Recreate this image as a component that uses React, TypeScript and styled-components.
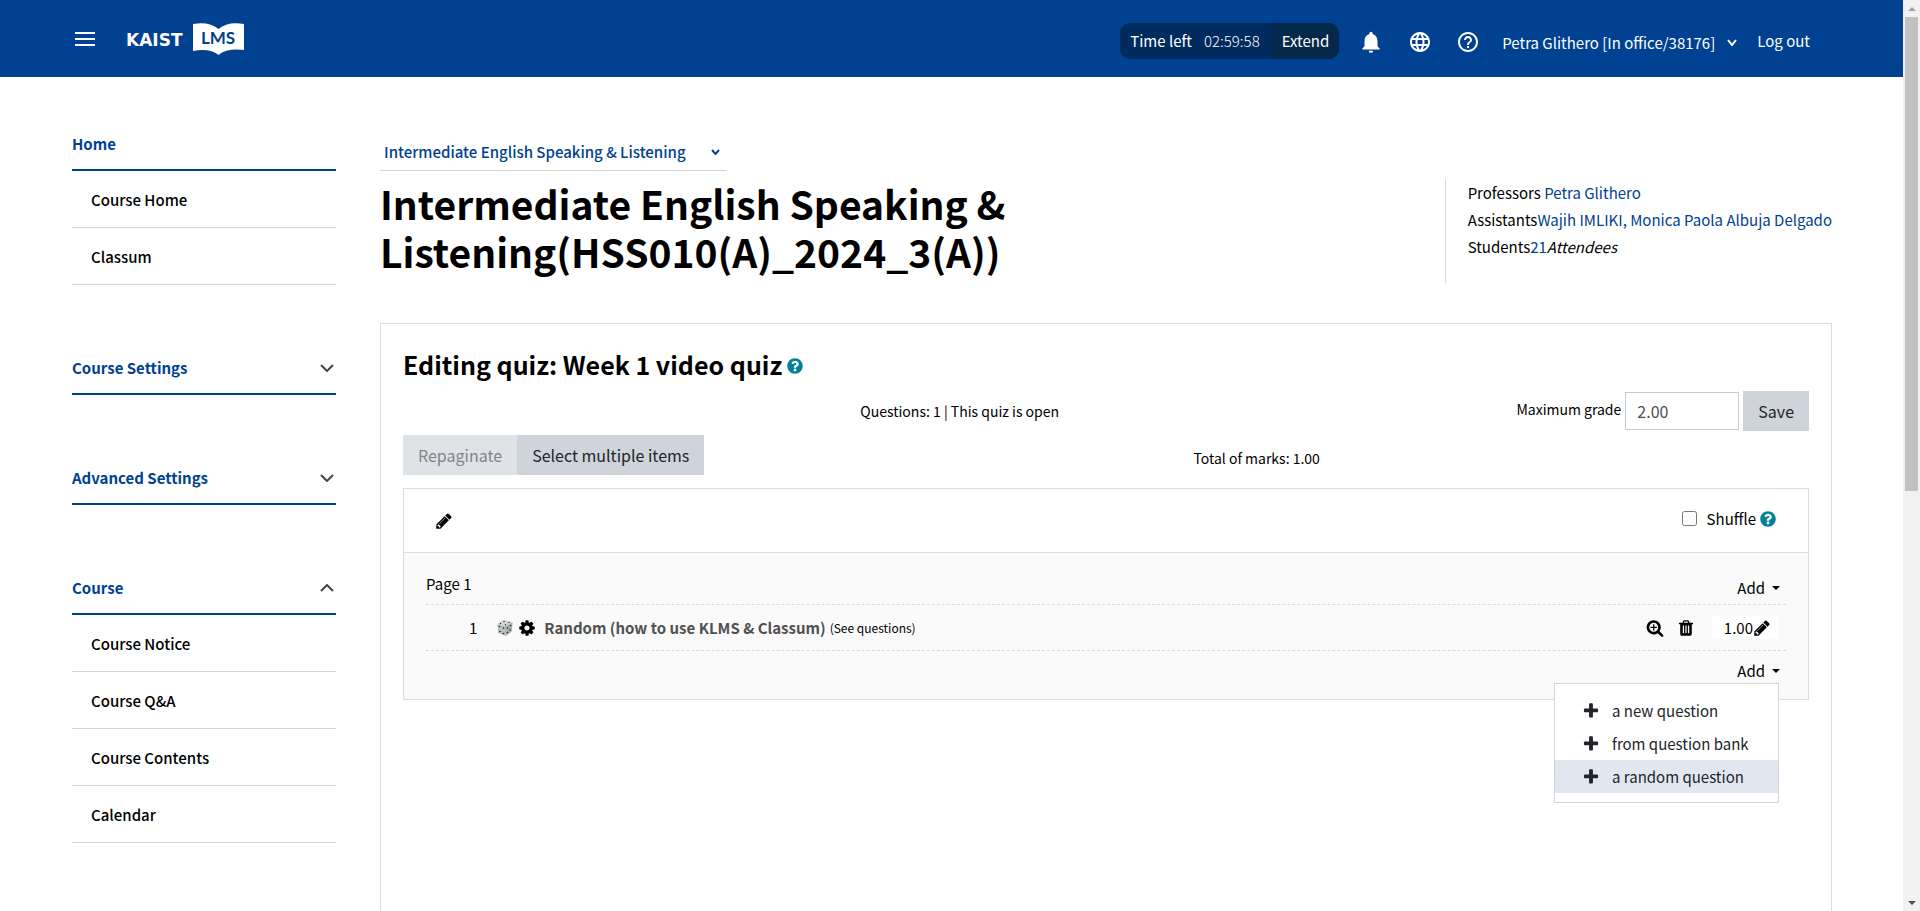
import React from "react";
import styled, { createGlobalStyle } from "styled-components";
import { MdNotifications, MdLanguage, MdHelpOutline } from "react-icons/md";
import { FaQuestionCircle } from "react-icons/fa";

const navy = "#004191";
const line = "#d5d5d5";
const panelLine = "#dddddd";

const GlobalStyle = createGlobalStyle`
  *, *::before, *::after { box-sizing: border-box; }
  body {
    margin: 0;
    color: #000;
    background: #fff;
    font-family: "Noto Sans CJK KR", "Noto Sans", sans-serif;
    font-size: 15px;
    line-height: 24px;
  }
  a { color: inherit; text-decoration: none; }
  h1, h2, p, ul { margin: 0; padding: 0; }
  ul { list-style: none; }
  button, input, select { font: inherit; color: inherit; }
  button { border: 0; padding: 0; background: none; cursor: pointer; }
  svg { display: block; flex: none; }
`;

/* ---------- icons ---------- */

const paths = {
  pencil:
    "M491 1536l91-91-235-235-91 91v107h128v128h107zm523-928q0-22-22-22-10 0-17 7l-542 542q-7 7-7 17 0 22 22 22 10 0 17-7l542-542q7-7 7-17zm-54-192l416 416-832 832h-416v-416zm683 96q0 53-37 90l-166 166-416-416 166-165q36-38 90-38 53 0 91 38l235 234q37 39 37 91z",
  cog: "M1152 896q0-106-75-181t-181-75-181 75-75 181 75 181 181 75 181-75 75-181zm512-109v222q0 12-8 23t-20 13l-185 28q-19 54-39 91 35 50 107 138 10 12 10 25t-9 23q-27 37-99 108t-94 71q-12 0-26-9l-138-108q-44 23-91 38-16 136-29 186-7 28-36 28h-222q-14 0-24.5-8.5t-11.5-21.5l-28-184q-49-16-90-37l-141 107q-10 9-25 9-14 0-25-11-126-114-165-168-7-10-7-23 0-12 8-23 15-21 51-66.5t54-70.5q-27-50-41-99l-183-27q-13-2-21-12.5t-8-23.5v-222q0-12 8-23t19-13l186-28q14-46 39-92-40-57-107-138-10-12-10-24 0-10 9-23 26-36 98.5-107.5t94.5-71.5q13 0 26 10l138 107q44-23 91-38 16-136 29-186 7-28 36-28h222q14 0 24.5 8.5t11.5 21.5l28 184q49 16 90 37l142-107q9-9 24-9 13 0 25 10 129 119 165 170 7 8 7 22 0 12-8 23-15 21-51 66.5t-54 70.5q26 50 41 98l183 28q13 2 21 12.5t8 23.5z",
  trash:
    "M704 1376v-704q0-14-9-23t-23-9h-64q-14 0-23 9t-9 23v704q0 14 9 23t23 9h64q14 0 23-9t9-23zm256 0v-704q0-14-9-23t-23-9h-64q-14 0-23 9t-9 23v704q0 14 9 23t23 9h64q14 0 23-9t9-23zm256 0v-704q0-14-9-23t-23-9h-64q-14 0-23 9t-9 23v704q0 14 9 23t23 9h64q14 0 23-9t9-23zm-544-992h448l-48-117q-7-9-17-11h-317q-10 2-17 11zm928 32v64q0 14-9 23t-23 9h-96v948q0 83-47 143.5t-113 60.5h-832q-66 0-113-58.5t-47-141.5v-952h-96q-14 0-23-9t-9-23v-64q0-14 9-23t23-9h309l70-167q15-37 54-63t79-26h320q40 0 79 26t54 63l70 167h309q14 0 23 9t9 23z",
  zoom: "M1088 800v64q0 13-9.5 22.5t-22.5 9.5h-224v224q0 13-9.5 22.5t-22.5 9.5h-64q-13 0-22.5-9.5t-9.5-22.5v-224h-224q-13 0-22.5-9.5t-9.5-22.5v-64q0-13 9.5-22.5t22.5-9.5h224v-224q0-13 9.5-22.5t22.5-9.5h64q13 0 22.5 9.5t9.5 22.5v224h224q13 0 22.5 9.5t9.5 22.5zm128 32q0-185-131.5-316.5t-316.5-131.5-316.5 131.5-131.5 316.5 131.5 316.5 316.5 131.5 316.5-131.5 131.5-316.5zm512 832q0 53-37.5 90.5t-90.5 37.5q-54 0-90-38l-343-342q-179 124-399 124-143 0-273.5-55.5t-225-150-150-225-55.5-273.5 55.5-273.5 150-225 225-150 273.5-55.5 273.5 55.5 225 150 150 225 55.5 273.5q0 220-124 399l343 343q37 37 37 90z",
  plus: "M1600 736v192q0 40-28 68t-68 28h-416v416q0 40-28 68t-68 28h-192q-40 0-68-28t-28-68v-416h-416q-40 0-68-28t-28-68v-192q0-40 28-68t68-28h416v-416q0-40 28-68t68-28h192q40 0 68 28t28 68v416h416q40 0 68 28t28 68z",
};

function Icon({ name, size = 18 }: { name: keyof typeof paths; size?: number }) {
  return (
    <svg width={size} height={size} viewBox="0 0 1792 1792" fill="currentColor" aria-hidden="true">
      <path d={paths[name]} />
    </svg>
  );
}

function Chevron({ width, height, stroke = 2, up = false }: { width: number; height: number; stroke?: number; up?: boolean }) {
  return (
    <svg width={width} height={height} viewBox={`0 0 ${width} ${height}`} fill="none" stroke="currentColor" strokeWidth={stroke} aria-hidden="true">
      <path d={up ? `M1 ${height - 1}L${width / 2} 1L${width - 1} ${height - 1}` : `M1 1L${width / 2} ${height - 1}L${width - 1} 1`} />
    </svg>
  );
}

function Dice() {
  return (
    <svg width="16" height="18" viewBox="0 0 16 18" aria-hidden="true">
      <path d="M7 1L15.500 3.500L14.500 12.500L8.500 17L1 14L.5 5Z" fill="#b9bfbf" />
      <path d="M7 1L15.500 3.500L8.500 7.500L.5 5Z" fill="#d3d8d8" />
      <path d="M8.500 7.500L15.500 3.500L14.500 12.500L8.500 17Z" fill="#a9b0b0" />
      <g fill="#1c2222">
        <circle cx="7" cy="2.500" r=".7" />
        <circle cx="3.500" cy="4.500" r=".7" />
        <circle cx="12" cy="3.500" r=".7" />
        <circle cx="8.500" cy="5.800" r=".7" />
        <circle cx="2.500" cy="7.500" r=".8" />
        <circle cx="6.500" cy="9" r=".8" />
        <circle cx="3" cy="12.500" r=".8" />
        <circle cx="6.500" cy="14.500" r=".8" />
        <circle cx="10.500" cy="9" r=".8" />
        <circle cx="13.500" cy="6.500" r=".8" />
        <circle cx="10.500" cy="13.500" r=".8" />
        <circle cx="13" cy="11" r=".8" />
      </g>
    </svg>
  );
}

function Logo() {
  return (
    <svg width="118" height="34" viewBox="0 0 118 34" role="img" aria-label="KAIST LMS">
      <text x="-1" y="24" fill="#fff" fontFamily="DejaVu Sans, sans-serif" fontWeight="700" fontSize="17">
        KAIST
      </text>
      <path d="M66 2Q82 -1 91.500 7Q101 -1 117 2V28Q100 26 91.500 33Q83 26 66 29Z" fill="#fff" />
      <text x="91" y="22" fill={navy} textAnchor="middle" fontFamily="Lato, sans-serif" fontWeight="700" fontSize="17">
        LMS
      </text>
    </svg>
  );
}

/* ---------- frame ---------- */

const Frame = styled.div`
  display: flex;
  height: 100vh;
`;

const Page = styled.div`
  flex: 1;
  min-width: 0;
  overflow: hidden;
`;

const ScrollTrack = styled.div`
  display: flex;
  flex-direction: column;
  align-items: center;
  width: 17px;
  background: #f1f1f1;
`;

const ScrollArrow = styled.div<{ $down?: boolean }>`
  display: grid;
  place-items: center;
  height: 17px;
  color: ${(p) => (p.$down ? "#505050" : "#a3a3a3")};
`;

const ScrollThumb = styled.div`
  width: 13px;
  height: 52%;
  background: #c1c1c1;
`;

const ScrollRail = styled.div`
  flex: 1;
`;

/* ---------- header ---------- */

const Header = styled.header`
  display: flex;
  align-items: center;
  justify-content: space-between;
  height: 77px;
  padding: 0 93px 0 75px;
  background: ${navy};
  color: #fff;
`;

const Brand = styled.div`
  display: flex;
  align-items: center;
  gap: 32px;
`;

const MenuButton = styled.button`
  display: grid;
  gap: 4px;
  width: 20px;
  span {
    height: 2px;
    background: #fff;
  }
`;

const Tools = styled.div`
  display: flex;
  align-items: center;
  padding-top: 4px;
`;

const Timer = styled.div`
  display: flex;
  height: 36px;
  margin-right: 19px;
  border-radius: 10px;
  overflow: hidden;
  line-height: 36px;
  background: #002b5e;
`;

const TimeLeft = styled.div`
  display: flex;
  gap: 12px;
  padding: 0 12px 0 10px;
`;

const TimeValue = styled.span`
  font-weight: 300;
`;

const ExtendButton = styled.button`
  padding: 0 10px;
  background: #05294b;
`;

const IconGroup = styled.div`
  display: flex;
  align-items: center;
  gap: 24px;
  margin-right: 22px;
  padding-top: 2px;
`;

const UserButton = styled.button`
  display: flex;
  align-items: center;
  gap: 12px;
  margin-right: 20px;
  padding-top: 4px;
`;

/* ---------- body columns ---------- */

const Columns = styled.div`
  display: flex;
  gap: 44px;
  padding: 55px 71px 0 72px;
`;

const Sidebar = styled.nav`
  display: flex;
  flex-direction: column;
  flex: none;
  gap: 71px;
  width: 264px;
`;

const NavHeading = styled.button`
  display: flex;
  align-items: center;
  justify-content: space-between;
  width: 100%;
  height: 39px;
  padding: 0 2px 13px 0;
  border-bottom: 2px solid ${navy};
  color: ${navy};
  font-weight: 700;
  svg {
    color: #444;
  }
`;

const NavLink = styled.a`
  display: block;
  height: 57px;
  padding: 1px 19px 0;
  border-bottom: 1px solid ${line};
  line-height: 56px;
  font-weight: 500;
`;

const Main = styled.main`
  flex: 1;
  min-width: 0;
`;

const CourseSelect = styled.label`
  display: inline-flex;
  align-items: center;
  height: 32px;
  margin-top: 7px;
  padding: 0 7px 6px 0;
  border-bottom: 1px solid ${line};
  color: ${navy};
  select {
    appearance: none;
    padding: 0 25px 0 4px;
    border: 0;
    background: none;
    font-weight: 500;
  }
`;

const TitleRow = styled.div`
  display: flex;
  justify-content: space-between;
  align-items: flex-start;
  height: 152px;
  padding-top: 8px;
`;

const CourseTitle = styled.h1`
  flex: 0 1 720px;
  font-size: 39px;
  line-height: 48px;
  font-weight: 700;
  overflow-wrap: anywhere;
`;

const People = styled.div`
  height: 104px;
  padding: 0 0 0 22px;
  border-left: 1px solid #ccd9e8;
  line-height: 27px;
  white-space: nowrap;
  a {
    color: ${navy};
  }
`;

const Panel = styled.section`
  min-height: 620px;
  padding: 22px;
  border: 1px solid ${panelLine};
`;

const QuizTitle = styled.h2`
  display: flex;
  align-items: center;
  gap: 5px;
  height: 36px;
  font-size: 25px;
  font-weight: 700;
  button {
    padding-top: 4px;
  }
`;

const HelpButton = styled.button`
  color: #008196;
`;

const ControlRow = styled.div<{ $end?: boolean }>`
  display: flex;
  align-items: center;
  height: 40px;
  margin-top: ${(p) => (p.$end ? "4px" : "9px")};
`;

const Centered = styled.p<{ $low?: boolean }>`
  flex: 1;
  padding-top: ${(p) => (p.$low ? "6px" : "0")};
  font-size: 14px;
  text-align: center;
`;

const GradeForm = styled.form`
  display: flex;
  align-items: center;
  gap: 4px;
`;

const GradeLabel = styled.label`
  padding-bottom: 4px;
  font-size: 14px;
`;

const GradeInput = styled.input`
  width: 114px;
  height: 38px;
  padding: 0 11px;
  border: 1px solid #c8cacd;
  color: #495057;
  font-size: 16px;
`;

const GrayButton = styled.button`
  height: 40px;
  padding: 0 15px;
  background: #ced4da;
  color: #212529;
  font-size: 16px;
  &:disabled {
    background: #dfe3e7;
    color: #818589;
  }
`;

const Section = styled.div`
  margin-top: 13px;
  border: 1px solid ${panelLine};
  background: #fafafa;
`;

const SectionHead = styled.div`
  display: flex;
  align-items: center;
  justify-content: space-between;
  height: 64px;
  padding: 0 32px 0 31px;
  border-bottom: 1px solid ${panelLine};
  background: #fff;
`;

const Shuffle = styled.div`
  display: flex;
  align-items: center;
  gap: 4px;
  padding-bottom: 4px;
  label {
    display: flex;
    align-items: center;
    gap: 10px;
  }
  input {
    width: 15px;
    height: 15px;
    margin: 0;
  }
`;

const SectionBody = styled.div`
  padding: 13px 22px 0;
`;

const PageRow = styled.div`
  display: flex;
  align-items: flex-start;
  justify-content: space-between;
  height: 38px;
  padding: 6px 6px 4px 0;
  button {
    align-self: flex-end;
  }
`;

const Slot = styled.div`
  display: flex;
  align-items: center;
  height: 47px;
  padding: 0 7px 0 43px;
  border: 1px dashed #d9d9d9;
  border-width: 1px 0;
`;

const SlotIcons = styled.div`
  display: flex;
  align-items: center;
  gap: 5px;
  margin: 0 8px 0 20px;
`;

const QuestionName = styled.a`
  margin-right: 4px;
  color: #505050;
  font-weight: 700;
`;

const SeeQuestions = styled.a`
  font-size: 12px;
`;

const SlotActions = styled.div`
  display: flex;
  align-items: center;
  gap: 13px;
  margin-left: auto;
`;

const MarkButton = styled.button`
  display: flex;
  align-items: center;
  height: 23px;
  margin-left: 4px;
  padding: 0 8px 0 12px;
  background: #fff;
`;

const AddRow = styled.div`
  display: flex;
  justify-content: flex-end;
  height: 48px;
  padding: 8px 6px 0 0;
`;

const Dropdown = styled.div`
  position: relative;
`;

const AddButton = styled.button`
  display: flex;
  align-items: center;
  gap: 7px;
`;

const Caret = styled.span`
  border: 4px solid transparent;
  border-top-color: currentColor;
  border-bottom: 0;
`;

const Menu = styled.ul`
  position: absolute;
  top: 24px;
  right: 1px;
  width: 225px;
  padding: 10px 0 9px;
  border: 1px solid #d3d6d9;
  background: #fff;
`;

const MenuItem = styled.a<{ $active?: boolean }>`
  display: flex;
  align-items: center;
  gap: 12px;
  height: 33px;
  padding-left: 27px;
  background: ${(p) => (p.$active ? "#e1e7f1" : "#fff")};
  color: #212529;
`;

/* ---------- content ---------- */

const groups: { title: string; open?: boolean; items: string[] }[] = [
  { title: "Home", items: ["Course Home", "Classum"] },
  { title: "Course Settings", open: false, items: [] },
  { title: "Advanced Settings", open: false, items: [] },
  { title: "Course", open: true, items: ["Course Notice", "Course Q&A", "Course Contents", "Calendar"] },
];

const addOptions = ["a new question", "from question bank", "a random question"];

export default function App() {
  return (
    <Frame>
      <GlobalStyle />
      <Page>
        <Header>
          <Brand>
            <MenuButton aria-label="Menu">
              <span />
              <span />
              <span />
            </MenuButton>
            <a href="#home">
              <Logo />
            </a>
          </Brand>
          <Tools>
            <Timer>
              <TimeLeft>
                <span>Time left</span>
                <TimeValue>02:59:58</TimeValue>
              </TimeLeft>
              <ExtendButton>Extend</ExtendButton>
            </Timer>
            <IconGroup>
              <button aria-label="Notifications"><MdNotifications size={26} /></button>
              <button aria-label="Language"><MdLanguage size={24} /></button>
              <button aria-label="Help"><MdHelpOutline size={24} /></button>
            </IconGroup>
            <UserButton>
              Petra Glithero [In office/38176]
              <Chevron width={10} height={7} />
            </UserButton>
            <a href="#logout">Log out</a>
          </Tools>
        </Header>

        <Columns>
          <Sidebar>
            {groups.map((g) => (
              <div key={g.title}>
                <NavHeading>
                  {g.title}
                  {g.open !== undefined && <Chevron width={14} height={8} up={g.open} />}
                </NavHeading>
                {g.items.map((item) => (
                  <NavLink key={item} href="#course">{item}</NavLink>
                ))}
              </div>
            ))}
          </Sidebar>

          <Main>
            <CourseSelect>
              <select aria-label="Course">
                <option>Intermediate English Speaking &amp; Listening</option>
              </select>
              <Chevron width={9} height={6} />
            </CourseSelect>

            <TitleRow>
              <CourseTitle>Intermediate English Speaking &amp; Listening(HSS010(A)_2024_3(A))</CourseTitle>
              <People>
                <p>Professors <a href="#petra">Petra Glithero</a></p>
                <p>Assistants<a href="#assistants">Wajih IMLIKI, Monica Paola Albuja Delgado</a></p>
                <p>Students<a href="#students">21</a><em>Attendees</em></p>
              </People>
            </TitleRow>

            <Panel>
              <QuizTitle>
                Editing quiz: Week 1 video quiz
                <HelpButton aria-label="Help with editing quiz"><FaQuestionCircle size={16} /></HelpButton>
              </QuizTitle>

              <ControlRow>
                <Centered>Questions: 1 | This quiz is open</Centered>
                <GradeForm>
                  <GradeLabel htmlFor="maxgrade">Maximum grade</GradeLabel>
                  <GradeInput id="maxgrade" defaultValue="2.00" />
                  <GrayButton type="button">Save</GrayButton>
                </GradeForm>
              </ControlRow>

              <ControlRow $end>
                <GrayButton disabled>Repaginate</GrayButton>
                <GrayButton>Select multiple items</GrayButton>
                <Centered $low>Total of marks: 1.00</Centered>
              </ControlRow>

              <Section>
                <SectionHead>
                  <button aria-label="Edit heading"><Icon name="pencil" /></button>
                  <Shuffle>
                    <label>
                      <input type="checkbox" />
                      Shuffle
                    </label>
                    <HelpButton aria-label="Help with shuffle"><FaQuestionCircle size={16} /></HelpButton>
                  </Shuffle>
                </SectionHead>
                <SectionBody>
                  <PageRow>
                    <span>Page 1</span>
                    <AddButton>Add <Caret /></AddButton>
                  </PageRow>
                  <Slot>
                    <span>1</span>
                    <SlotIcons>
                      <Dice />
                      <Icon name="cog" />
                    </SlotIcons>
                    <QuestionName href="#question">Random (how to use KLMS &amp; Classum)</QuestionName>
                    <SeeQuestions href="#questions">(See questions)</SeeQuestions>
                    <SlotActions>
                      <button aria-label="Preview question"><Icon name="zoom" /></button>
                      <button aria-label="Delete"><Icon name="trash" /></button>
                      <MarkButton aria-label="Edit mark 1.00">
                        1.00
                        <Icon name="pencil" />
                      </MarkButton>
                    </SlotActions>
                  </Slot>
                  <AddRow>
                    <Dropdown>
                      <AddButton aria-expanded="true">Add <Caret /></AddButton>
                      <Menu>
                        {addOptions.map((o, i) => (
                          <li key={o}>
                            <MenuItem href="#add" $active={i === 2}>
                              <Icon name="plus" />
                              {o}
                            </MenuItem>
                          </li>
                        ))}
                      </Menu>
                    </Dropdown>
                  </AddRow>
                </SectionBody>
              </Section>
            </Panel>
          </Main>
        </Columns>
      </Page>
      <ScrollTrack aria-hidden="true">
        <ScrollArrow>
          <svg width="8" height="4" viewBox="0 0 8 4" fill="currentColor"><path d="M0 4L4 0L8 4Z" /></svg>
        </ScrollArrow>
        <ScrollThumb />
        <ScrollRail />
        <ScrollArrow $down>
          <svg width="8" height="4" viewBox="0 0 8 4" fill="currentColor"><path d="M0 0L4 4L8 0Z" /></svg>
        </ScrollArrow>
      </ScrollTrack>
    </Frame>
  );
}
